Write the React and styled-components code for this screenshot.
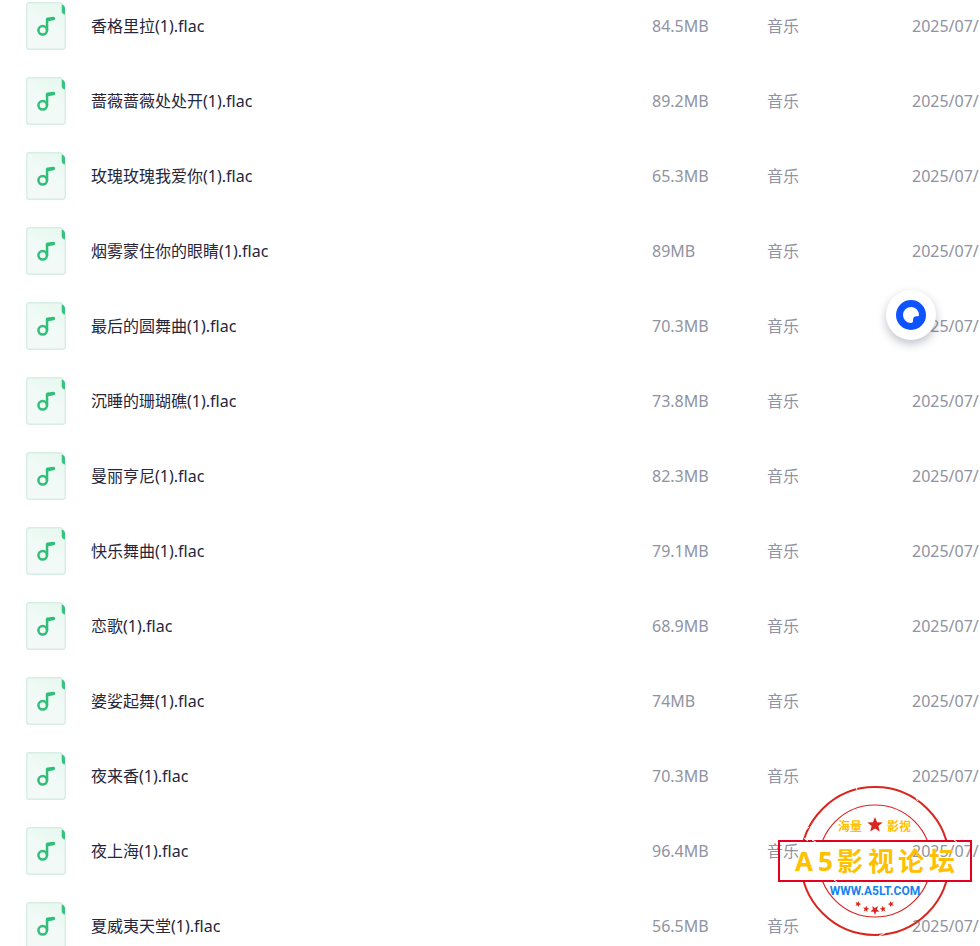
import React from "react";
import styled, { createGlobalStyle } from "styled-components";

const files = [
  { name: "香格里拉(1).flac", size: "84.5MB" },
  { name: "蔷薇蔷薇处处开(1).flac", size: "89.2MB" },
  { name: "玫瑰玫瑰我爱你(1).flac", size: "65.3MB" },
  { name: "烟雾蒙住你的眼睛(1).flac", size: "89MB" },
  { name: "最后的圆舞曲(1).flac", size: "70.3MB" },
  { name: "沉睡的珊瑚礁(1).flac", size: "73.8MB" },
  { name: "曼丽亨尼(1).flac", size: "82.3MB" },
  { name: "快乐舞曲(1).flac", size: "79.1MB" },
  { name: "恋歌(1).flac", size: "68.9MB" },
  { name: "婆娑起舞(1).flac", size: "74MB" },
  { name: "夜来香(1).flac", size: "70.3MB" },
  { name: "夜上海(1).flac", size: "96.4MB" },
  { name: "夏威夷天堂(1).flac", size: "56.5MB" },
];

const STAR =
  "M0 -10 L2.6 -3.3 L9.6 -3.1 L4.2 1.4 L6 8.2 L0 4.4 L-6 8.2 L-4.2 1.4 L-9.6 -3.1 L-2.6 -3.3 Z";

const MusicFileIcon = () => (
  <FileSvg viewBox="0 0 40 48" aria-hidden="true">
    <defs>
      <linearGradient id="paper" x1="0.8" y1="0" x2="0.3" y2="1">
        <stop offset="0" stopColor="#e6f8ef" />
        <stop offset="0.5" stopColor="#f1faf7" />
        <stop offset="1" stopColor="#f3f9f8" />
      </linearGradient>
    </defs>
    <path
      d="M3 0.8H34Q36 0.8 36 3V9.5Q36.2 12.4 39.3 12.6V44.5Q39.3 47.2 36.5 47.2H3Q0.7 47.2 0.7 44.5V3.4Q0.7 0.8 3 0.8Z"
      fill="url(#paper)"
      stroke="#d7eee4"
      strokeWidth="1.4"
    />
    <path d="M35.8 2.6Q39 3.4 39 6.5V12.4Q35.8 12 35.8 8.8Z" fill="#35c37d" />
    <circle cx="16.7" cy="28.3" r="4.3" fill="none" stroke="#2fbf78" strokeWidth="2.5" />
    <path
      d="M19.8 28.5V17.3Q19.8 15.7 21.4 15.5L27.4 14.7Q29.2 14.6 29.2 16.4Q29.2 18 27.6 18.3L22.3 19.2V28.5Z"
      fill="#2fbf78"
    />
  </FileSvg>
);

const ForumStamp = () => (
  <StampSvg viewBox="0 0 196 152" role="img" aria-label="A5影视论坛">
    <defs>
      <clipPath id="outside">
        <path d="M0 0H196V55H0ZM0 97H196V152H0Z" />
      </clipPath>
    </defs>
    <g clipPath="url(#outside)" fill="none" stroke="#d9261f">
      <circle cx="98" cy="76" r="74" strokeWidth="2" />
      <circle cx="98" cy="76" r="56" strokeWidth="1.2" />
    </g>
    <rect x="2" y="56" width="192" height="40" fill="none" stroke="#e60020" strokeWidth="2" />
    <g fill="#ffc000" fontWeight="700">
      <text x="61" y="46" fontSize="12">海量</text>
      <text x="110" y="46" fontSize="12">影视</text>
      <text x="18 41 60 91 121 152" y="86" fontSize="26">A5影视论坛</text>
    </g>
    <path d={STAR} fill="#d9261f" transform="translate(98 40) scale(.8)" />
    <StampUrl x="98" y="110" textAnchor="middle">WWW.A5LT.COM</StampUrl>
    <g fill="#d9261f">
      <path d={STAR} transform="translate(81 119) rotate(20) scale(.32)" />
      <path d={STAR} transform="translate(89 124) rotate(10) scale(.32)" />
      <path d={STAR} transform="translate(98 125) rotate(36) scale(.48)" />
      <path d={STAR} transform="translate(106 124) rotate(-10) scale(.32)" />
      <path d={STAR} transform="translate(114 119) rotate(-20) scale(.32)" />
    </g>
    <g stroke="#fff" strokeWidth="1">
      <path d="M27 46L32 42M79 1L80 5M139 13L141 16M102 151L108 148M35 55L39 57M57 95L60 97M177 55L180 57M27 53L31 56" />
    </g>
  </StampSvg>
);

export default function App() {
  return (
    <Page>
      <GlobalStyle />
      <FileTable>
        <colgroup>
          <col />
          <SizeCol />
          <TypeCol />
          <DateCol />
        </colgroup>
        <tbody>
          {files.map((file) => (
            <tr key={file.name}>
              <Cell>
                <NameBox>
                  <MusicFileIcon />
                  <FileName>{file.name}</FileName>
                </NameBox>
              </Cell>
              <Cell>{file.size}</Cell>
              <Cell>音乐</Cell>
              <Cell>2025/07/</Cell>
            </tr>
          ))}
        </tbody>
      </FileTable>
      <FloatButton type="button" aria-label="助手">
        <svg width="30" height="30" viewBox="0 0 30 30">
          <circle cx="15" cy="15" r="15" fill="#0d53ff" />
          <path
            d="M15 7A8 8 0 0 1 23 15Q23 16.2 21.8 16.2H20.5Q17 16.4 17 20V21.6Q16.8 23 15 23A8 8 0 0 1 15 7Z"
            fill="#fff"
          />
        </svg>
      </FloatButton>
      <ForumStamp />
    </Page>
  );
}

const GlobalStyle = createGlobalStyle`
  body {
    margin: 0;
    background: #fff;
    font-family: "Noto Sans", "Noto Sans CJK SC", sans-serif;
  }
`;

const Page = styled.main`
  position: relative;
  height: 100vh;
  overflow: hidden;
`;

const FileTable = styled.table`
  width: 100%;
  margin-top: -12px;
  border-collapse: collapse;
  table-layout: fixed;
`;

const SizeCol = styled.col`
  width: 115px;
`;

const TypeCol = styled.col`
  width: 145px;
`;

const DateCol = styled.col`
  width: 68px;
`;

const Cell = styled.td`
  height: 75px;
  padding: 0;
  overflow: hidden;
  color: #8f93a2;
  font-size: 16px;
  line-height: 24px;
  white-space: nowrap;
`;

const NameBox = styled.div`
  display: flex;
  align-items: center;
  gap: 25px;
  padding-left: 26px;
`;

const FileName = styled.span`
  color: #25263c;
`;

const FileSvg = styled.svg`
  flex: none;
  width: 40px;
  height: 48px;
`;

const FloatButton = styled.button`
  position: absolute;
  top: 290px;
  right: 44px;
  display: flex;
  align-items: center;
  justify-content: center;
  width: 50px;
  height: 50px;
  padding: 0;
  border: 0;
  border-radius: 50%;
  background: #fff;
  box-shadow: 0 4px 10px rgba(30, 35, 70, 0.28);
  cursor: pointer;
`;

const StampSvg = styled.svg`
  position: absolute;
  right: 7px;
  bottom: 9px;
  width: 196px;
  height: 152px;
  pointer-events: none;
`;

const StampUrl = styled.text`
  fill: #1683f0;
  font-family: "Roboto", "Liberation Sans", sans-serif;
  font-size: 12px;
  font-weight: 700;
`;
